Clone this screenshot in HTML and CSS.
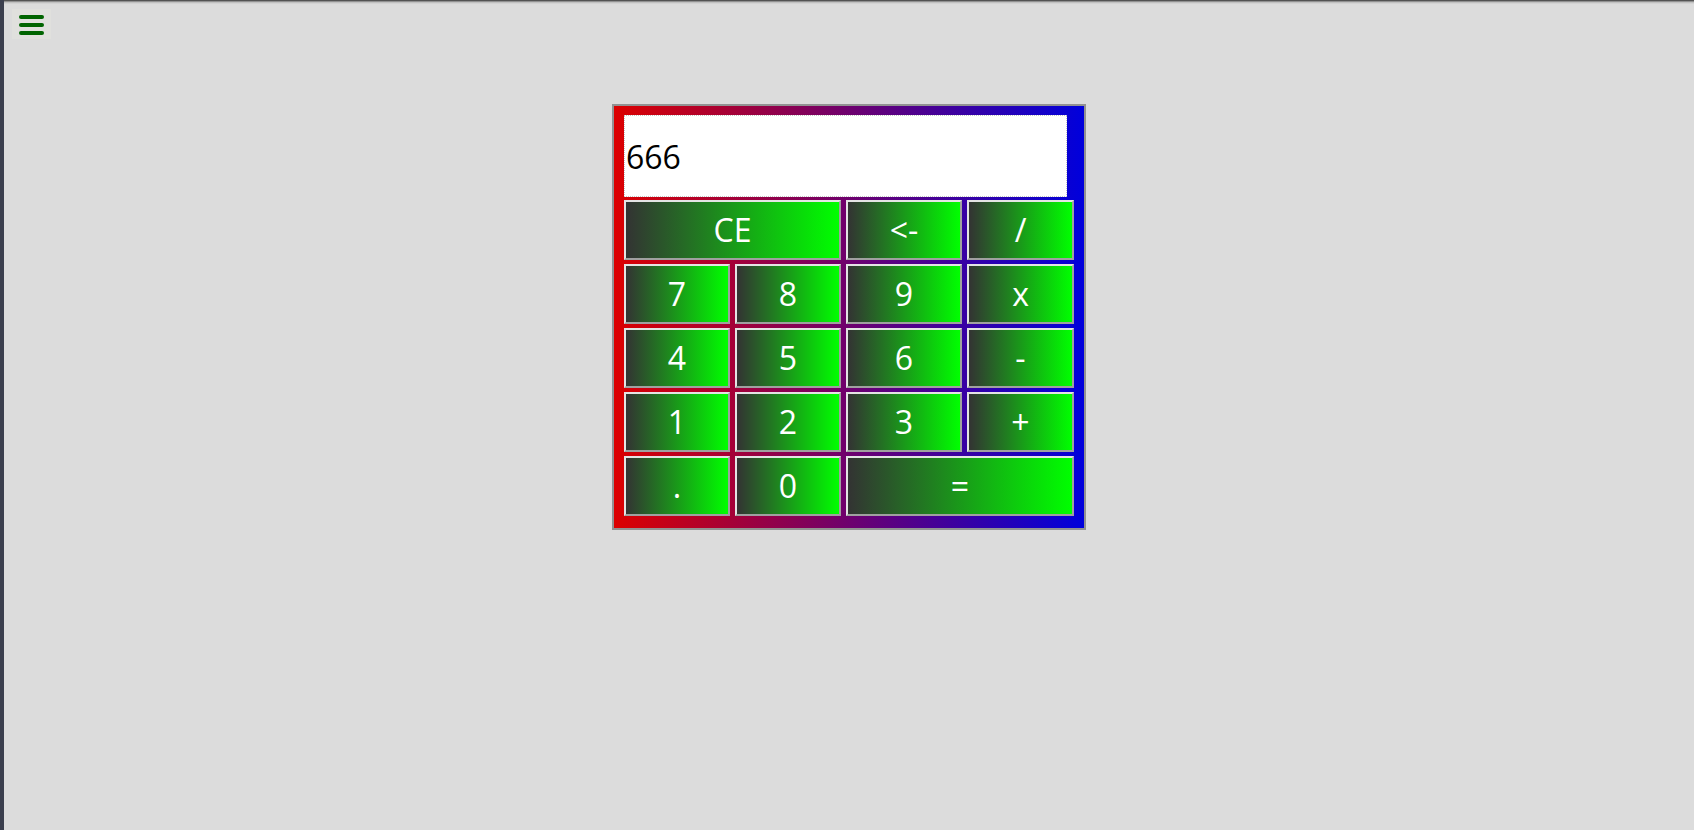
FILE: index.html
```html
<!DOCTYPE html>
<html>
<head>
<meta charset="utf-8">
<link rel="stylesheet" href="styles.css">
</head>
<body>
<div class="page">
  <button class="menu" aria-label="menu"><span></span><span></span><span></span></button>
  <div class="calc">
    <input class="display" type="text" value="666">
    <div class="keys">
      <button class="key wide">CE</button>
      <button class="key">&lt;-</button>
      <button class="key">/</button>
      <button class="key">7</button>
      <button class="key">8</button>
      <button class="key">9</button>
      <button class="key">x</button>
      <button class="key">4</button>
      <button class="key">5</button>
      <button class="key">6</button>
      <button class="key">-</button>
      <button class="key">1</button>
      <button class="key">2</button>
      <button class="key">3</button>
      <button class="key">+</button>
      <button class="key">.</button>
      <button class="key">0</button>
      <button class="key wide">=</button>
    </div>
  </div>
</div>
</body>
</html>
```

FILE: styles.css
```css
html, body {
  margin: 0;
  padding: 0;
  height: 100%;
}
body {
  background-color: #dcdcdc;
  background-image: linear-gradient(#3c3c3c 0, #6a6a6a 1px, #b8b8b8 2px, #dcdcdc 4px);
  background-repeat: no-repeat;
  background-size: 100% 4px;
  border-left: 4px solid #3b3f4e;
  font-family: "Open Sans", "Noto Sans", sans-serif;
  overflow: hidden;
}
.page {
  display: flex;
  flex-direction: column;
  align-items: flex-start;
}
.menu {
  margin: 9px 0 0 8px;
  width: 39px;
  height: 30px;
  background: #e0e0dd;
  border: none;
  padding: 6px 0 0 7px;
  display: flex;
  flex-direction: column;
  gap: 4px;
  box-sizing: border-box;
}
.menu span {
  display: block;
  width: 25px;
  height: 4px;
  border-radius: 2px;
  background: #006400;
}
.calc {
  align-self: center;
  margin-top: 65px;
  width: 474px;
  box-sizing: border-box;
  border: 2px solid #929292;
  padding: 9px 10px 12px;
  background: linear-gradient(to right, #dc0000, #0000dc);
  display: flex;
  flex-direction: column;
  gap: 3px;
}
.display {
  width: 443px;
  height: 82px;
  box-sizing: border-box;
  border: 1px dotted #c4c4c4;
  padding: 0 1px;
  margin: 0;
  background: #fff;
  font-family: "Open Sans", "Noto Sans", sans-serif;
  font-size: 32px;
  color: #000;
  outline: none;
}
.keys {
  display: grid;
  grid-template-columns: 106px 106px 116px 107px;
  grid-auto-rows: 60px;
  column-gap: 5px;
  row-gap: 4px;
}
.key {
  margin: 0;
  padding: 0;
  border-style: solid;
  border-width: 2px;
  border-color: #e4e4e4 #a0a0a0 #a0a0a0 #e4e4e4;
  background: linear-gradient(to right, #333333, #00ff00);
  color: #fff;
  font-family: "Open Sans", "Noto Sans", sans-serif;
  font-size: 32px;
  line-height: 1;
}
.wide {
  grid-column: span 2;
}
```
